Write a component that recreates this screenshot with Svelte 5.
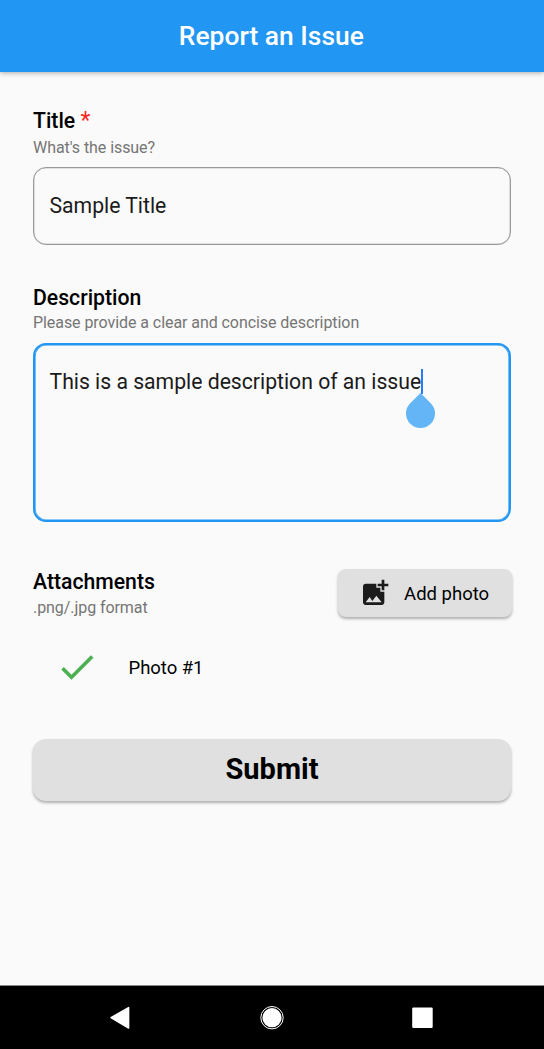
<script>
  let title = $state('Sample Title');
  let description = $state('This is a sample description of an issue');
  const photos = ['Photo #1'];
</script>

<div class="screen">
  <header><h1>Report an Issue</h1></header>

  <main>
    <section>
      <h2>Title <span class="required">*</span></h2>
      <p class="hint">What's the issue?</p>
      <div class="field">{title}</div>
    </section>

    <section class="description">
      <h2>Description</h2>
      <p class="hint">Please provide a clear and concise description</p>
      <div class="field area">
        <span class="value">{description}<span class="caret"></span><span class="handle"></span></span>
      </div>
    </section>

    <section class="attachments">
      <div>
        <h2>Attachments</h2>
        <p class="hint">.png/.jpg format</p>
      </div>
      <button class="add">
        <svg viewBox="0 0 24 24" width="32" height="32" fill="#1b1b1b">
          <path d="M19 7v2.99s-1.99.01-2 0V7h-3s.01-1.99 0-2h3V2h2v3h3v2h-3zm-3 4V8h-3V5H5c-1.1 0-2 .9-2 2v12c0 1.1.9 2 2 2h12c1.1 0 2-.9 2-2v-8h-3zM5 19l3-4 2 3 3-4 4 5H5z" />
        </svg>
        <span>Add photo</span>
      </button>
    </section>

    {#each photos as photo}
      <div class="photo">
        <svg viewBox="0 0 24 24" width="44" height="44" fill="#4caf50">
          <path d="M9 16.17L4.83 12l-1.42 1.41L9 19 21 7l-1.41-1.41z" />
        </svg>
        <span>{photo}</span>
      </div>
    {/each}

    <button class="submit">Submit</button>
  </main>

  <nav>
    <svg viewBox="0 0 24 24" width="24" height="24" fill="#fff" stroke="#fff" stroke-width="1.5" stroke-linejoin="round">
      <path d="M3 11.7 20.6 1.6V22Z" />
    </svg>
    <svg viewBox="0 0 24 24" width="24" height="24" fill="#fff">
      <circle cx="12" cy="11.7" r="11.2" fill="none" stroke="#fff" stroke-width="1" />
      <circle cx="12" cy="11.7" r="9.6" />
    </svg>
    <svg viewBox="0 0 24 24" width="24" height="24" fill="#fff">
      <rect x="1.2" y="1.4" width="20.5" height="20.5" rx="1.2" />
    </svg>
  </nav>
</div>

<style>
  :global(body) { margin: 0; background: #fafafa; }
  .screen {
    width: 544px;
    height: 1049px;
    display: flex;
    flex-direction: column;
    background: #fafafa;
    color: #000;
    font-family: Roboto, sans-serif;
    overflow: hidden;
  }
  header {
    height: 72px;
    flex: none;
    display: flex;
    align-items: center;
    justify-content: center;
    background: #2196f3;
    box-shadow: 0 1px 5px rgba(0, 0, 0, 0.32);
  }
  h1, h2, p { margin: 0; }
  h1 { color: #fff; font-size: 26.4px; font-weight: 500; letter-spacing: 0.02px; line-height: 32px; padding-right: 1.4px; }
  main { flex: 1; padding: 36px 33px 0; display: flex; flex-direction: column; }
  h2 { font-size: 21.2px; font-weight: 500; letter-spacing: 0.01px; line-height: 25px; }
  .required { color: #f9281c; font-size: 23px; font-weight: 400; line-height: 0; }
  .hint { margin-top: 5px; font-size: 16px; line-height: 20px; color: #757575; letter-spacing: -0.065px; }
  .field {
    box-sizing: border-box;
    height: 78px;
    margin-top: 9px;
    padding: 0 15.5px 2px;
    display: flex;
    align-items: center;
    border: 1px solid #999;
    box-shadow: inset 0 0 0 0.3px #999;
    border-radius: 13px;
    font-size: 21.2px;
    line-height: 25px;
    letter-spacing: -0.01px;
    color: #1b1b1b;
  }
  .description { margin-top: 40px; }
  .description .hint { margin-top: 3px; }
  .area {
    height: 179px;
    margin-top: 10px;
    padding: 24px 14.5px;
    align-items: flex-start;
    border: 2px solid #2196f3;
    box-shadow: inset 0 0 0 0.6px #2196f3;
  }
  .value { position: relative; white-space: nowrap; }
  .caret { position: absolute; right: -2px; top: 0; width: 2px; height: 25px; background: #2979ff; }
  .handle {
    position: absolute;
    right: -14.3px;
    top: 30px;
    width: 29px;
    height: 29px;
    border-radius: 0 50% 50% 50%;
    background: #64b5f6;
    transform: rotate(45deg);
  }
  .attachments { margin-top: 47px; height: 49px; display: flex; justify-content: space-between; }
  .attachments .hint { margin-top: 4px; }
  button { border: 0; background: #e0e0e0; color: #000; font-family: inherit; box-shadow: 0 2px 3px rgba(0, 0, 0, 0.3); }
  .add {
    width: 174px;
    height: 48px;
    margin-right: -0.6px;
    padding: 0 0 0 21px;
    display: flex;
    align-items: center;
    gap: 13.5px;
    border-radius: 8px;
    font-size: 18.5px;
    letter-spacing: 0;
    white-space: nowrap;
  }
  .add span { padding-top: 2px; }
  .photo { height: 44px; margin-top: 27px; padding-left: 22px; display: flex; align-items: center; gap: 29.5px; font-size: 18.5px; letter-spacing: -0.03px; }
  .photo span { padding-top: 1px; }
  .submit { height: 61.5px; margin: 50px -0.4px 0; padding: 0 0 2px; border-radius: 13px; font-size: 29px; font-weight: 700; }
  nav {
    box-sizing: border-box;
    height: 64px;
    flex: none;
    padding: 0 109px 0 108px;
    display: flex;
    align-items: center;
    justify-content: space-between;
    background: #000;
    border-top: 1px solid #888;
  }
</style>
